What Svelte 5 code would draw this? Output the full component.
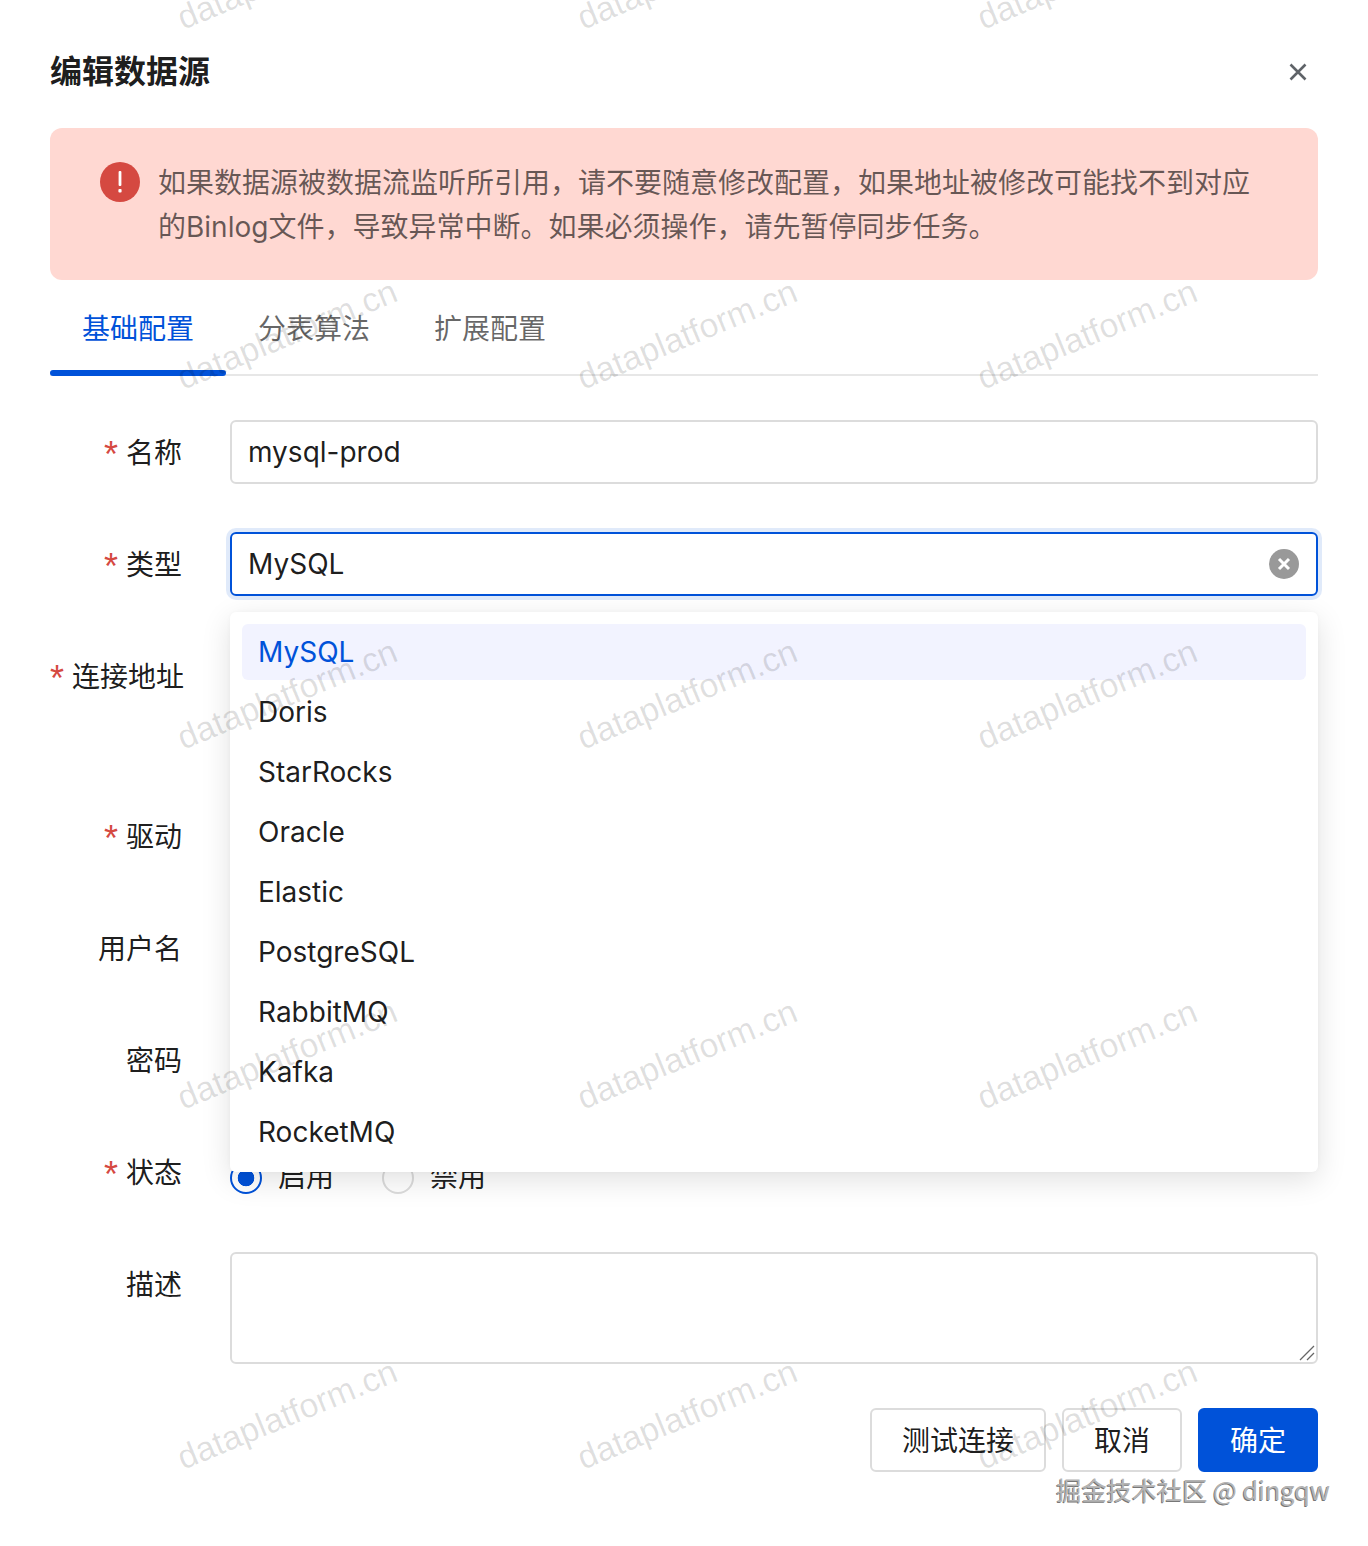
<script lang="ts">
  const options = ["MySQL", "Doris", "StarRocks", "Oracle", "Elastic", "PostgreSQL", "RabbitMQ", "Kafka", "RocketMQ"];
  const tabs = ["基础配置", "分表算法", "扩展配置"];

  // watermark tiles: 400 x 360
  const marks: { x: number; y: number }[] = [];
  for (let row = 0; row < 5; row++) {
    for (let col = 0; col < 3; col++) {
      marks.push({ x: 287 + col * 400, y: -26 + row * 360 });
    }
  }
</script>

<div class="page">
  <header class="head">
    <h1>编辑数据源</h1>
    <button class="close" aria-label="关闭">
      <svg viewBox="0 0 18 18" aria-hidden="true">
        <path d="M1.5 1.5 16.5 16.5M16.5 1.5 1.5 16.5" fill="none" stroke="currentColor" stroke-width="2.6" />
      </svg>
    </button>
  </header>

  <div class="alert">
    <svg class="alert-icon" viewBox="0 0 40 40" aria-hidden="true">
      <circle cx="20" cy="20" r="20" fill="#d54941" />
      <rect x="18.6" y="9" width="2.8" height="15" rx="1" fill="#fff" />
      <rect x="18.4" y="27" width="3.2" height="3.6" rx="1" fill="#fff" />
    </svg>
    <p>如果数据源被数据流监听所引用，请不要随意修改配置，如果地址被修改可能找不到对应的Binlog文件，导致异常中断。如果必须操作，请先暂停同步任务。</p>
  </div>

  <nav class="tabs">
    {#each tabs as tab, i}
      <div class="tab" class:active={i === 0}>{tab}</div>
    {/each}
  </nav>

  <form class="form">
    <div class="row">
      <div class="label"><i>*</i>名称</div>
      <input class="input" value="mysql-prod" readonly />
    </div>

    <div class="row type-row">
      <div class="label"><i>*</i>类型</div>
      <div class="input focused">
        <span>MySQL</span>
        <svg class="clear" viewBox="0 0 30 30" aria-hidden="true">
          <circle cx="15" cy="15" r="15" fill="#999" />
          <path d="M10 10 20 20M20 10 10 20" fill="none" stroke="#fff" stroke-width="3" />
        </svg>
      </div>
      <ul class="dropdown">
        {#each options as opt, i}
          <li class:selected={i === 0}>{opt}</li>
        {/each}
      </ul>
    </div>

    <div class="row tall">
      <div class="label"><i>*</i>连接地址</div>
    </div>
    <div class="row">
      <div class="label"><i>*</i>驱动</div>
    </div>
    <div class="row">
      <div class="label">用户名</div>
    </div>
    <div class="row">
      <div class="label">密码</div>
    </div>

    <div class="row">
      <div class="label"><i>*</i>状态</div>
      <div class="radios">
        <span class="radio on"></span><span class="radio-text first">启用</span>
        <span class="radio"></span><span class="radio-text">禁用</span>
      </div>
    </div>

    <div class="row">
      <div class="label">描述</div>
      <div class="area-wrap">
        <textarea class="input area"></textarea>
        <svg class="grip" viewBox="0 0 16 16" aria-hidden="true">
          <path d="M1 15 15 1M8 15 15 8" fill="none" stroke="#666" stroke-width="1.3" />
        </svg>
      </div>
    </div>
  </form>

  <footer class="foot">
    <button class="btn test">测试连接</button>
    <button class="btn cancel">取消</button>
    <button class="btn primary">确定</button>
  </footer>

  {#each marks as m}
    <span class="mark" style="left: {m.x}px; top: {m.y}px">dataplatform.cn</span>
  {/each}

  <span class="credit">掘金技术社区 @ dingqw</span>
</div>

<style>
  :global(body) {
    margin: 0;
    background: #fff;
  }

  .page {
    position: relative;
    box-sizing: border-box;
    width: 1368px;
    height: 1546px;
    padding: 50px 50px 0;
    overflow: hidden;
    font-family: Inter, "Noto Sans CJK SC", sans-serif;
    font-size: 28px;
    color: rgba(0, 0, 0, 0.9);
  }

  .head {
    display: flex;
    align-items: center;
    justify-content: space-between;
    height: 44px;
    margin-bottom: 34px;
  }

  h1 {
    margin: 0;
    font-size: 32px;
    font-weight: 600;
    line-height: 44px;
  }

  .close {
    width: 18px;
    height: 18px;
    margin-right: 11px;
    padding: 0;
    border: 0;
    background: none;
    color: #5f6368;
  }

  .close svg {
    display: block;
  }

  .alert {
    display: flex;
    gap: 18px;
    height: 152px;
    box-sizing: border-box;
    padding: 32px 48px 32px 50px;
    background: #ffd8d2;
    border-radius: 12px;
  }

  .alert-icon {
    flex: none;
    width: 40px;
    height: 40px;
    margin-top: 2px;
  }

  .alert p {
    margin: 0;
    padding-top: 1px;
    line-height: 44px;
    color: rgba(0, 0, 0, 0.6);
  }

  .tabs {
    display: flex;
    height: 96px;
    box-sizing: border-box;
    border-bottom: 2px solid #e7e7e7;
    margin-bottom: 44px;
  }

  .tab {
    position: relative;
    width: 176px;
    padding-top: 29px;
    text-align: center;
    line-height: 40px;
    color: rgba(0, 0, 0, 0.6);
  }

  .tab.active {
    color: #0052d9;
  }

  .tab.active::after {
    content: "";
    position: absolute;
    left: 0;
    right: 0;
    bottom: -2px;
    height: 6px;
    border-radius: 3px;
    background: #0052d9;
  }

  .form {
    display: flex;
    flex-direction: column;
    gap: 48px;
  }

  .row {
    display: flex;
    gap: 48px;
    min-height: 64px;
  }

  .row.tall {
    min-height: 112px;
  }

  .type-row {
    position: relative;
  }

  .label {
    flex: none;
    width: 132px;
    height: 64px;
    line-height: 66px;
    text-align: right;
    white-space: nowrap;
  }

  .label i {
    position: relative;
    top: 4px;
    margin-right: 8px;
    font-family: "Liberation Sans", sans-serif;
    font-size: 36px;
    line-height: 0;
    font-style: normal;
    color: #d54941;
  }

  .input {
    flex: 1;
    display: flex;
    align-items: center;
    justify-content: space-between;
    box-sizing: border-box;
    height: 64px;
    padding: 0 17px 0 16px;
    background: transparent;
    border: 2px solid #dcdcdc;
    border-radius: 6px;
    outline: none;
    font: inherit;
    color: inherit;
  }

  .input.focused {
    border-color: #0052d9;
    box-shadow: 0 0 0 4px rgba(0, 82, 217, 0.12);
  }

  .clear {
    width: 30px;
    height: 30px;
  }

  .area-wrap {
    position: relative;
    flex: 1;
    height: 112px;
  }

  .area {
    display: block;
    width: 100%;
    height: 112px;
    padding: 12px 16px;
    resize: none;
  }

  .grip {
    position: absolute;
    right: 3px;
    bottom: 3px;
    width: 16px;
    height: 16px;
  }

  .dropdown {
    position: absolute;
    left: 180px;
    right: 0;
    top: 80px;
    z-index: 2;
    box-sizing: border-box;
    height: 560px;
    margin: 0;
    padding: 12px;
    list-style: none;
    background: #fff;
    border-radius: 6px;
    box-shadow: 0 8px 30px rgba(0, 0, 0, 0.12), 0 0 4px rgba(0, 0, 0, 0.03);
  }

  .dropdown li {
    height: 56px;
    margin-bottom: 4px;
    padding-left: 16px;
    border-radius: 6px;
    line-height: 56px;
  }

  .dropdown li.selected {
    background: #f2f3ff;
    color: #0052d9;
  }

  .radios {
    display: flex;
    align-items: center;
    height: 64px;
    margin: 6px 0 -6px;
  }

  .radio {
    box-sizing: border-box;
    flex: none;
    width: 32px;
    height: 32px;
    border: 2px solid #dcdcdc;
    border-radius: 50%;
  }

  .radio.on {
    border-color: #0052d9;
    background: radial-gradient(circle, #0052d9 0 8px, #fff 8.6px);
  }

  .radio-text {
    margin-left: 16px;
    padding-bottom: 7px;
  }

  .radio-text.first {
    margin-right: 48px;
  }

  .foot {
    display: flex;
    justify-content: flex-end;
    gap: 16px;
    margin-top: 44px;
  }

  .btn {
    height: 64px;
    padding: 0 0 2px;
    border: 2px solid #dcdcdc;
    border-radius: 6px;
    background: transparent;
    font: inherit;
    color: inherit;
  }

  .test {
    width: 176px;
  }

  .cancel {
    width: 120px;
  }

  .primary {
    width: 120px;
    border-color: #0052d9;
    background: #0052d9;
    color: #fff;
  }

  .mark {
    position: absolute;
    z-index: 3;
    transform: translate(-50%, -50%) rotate(-22.5deg);
    font-family: "Liberation Sans", sans-serif;
    font-size: 34px;
    line-height: 40px;
    white-space: nowrap;
    color: rgba(0, 0, 0, 0.13);
    pointer-events: none;
  }

  .credit {
    position: absolute;
    z-index: 4;
    right: 38px;
    top: 1471px;
    font-family: "Noto Sans CJK SC", sans-serif;
    font-size: 25.2px;
    line-height: 36px;
    white-space: nowrap;
    color: #b4b4b4;
    text-shadow: -1px 1px 0.5px #777;
  }
</style>
